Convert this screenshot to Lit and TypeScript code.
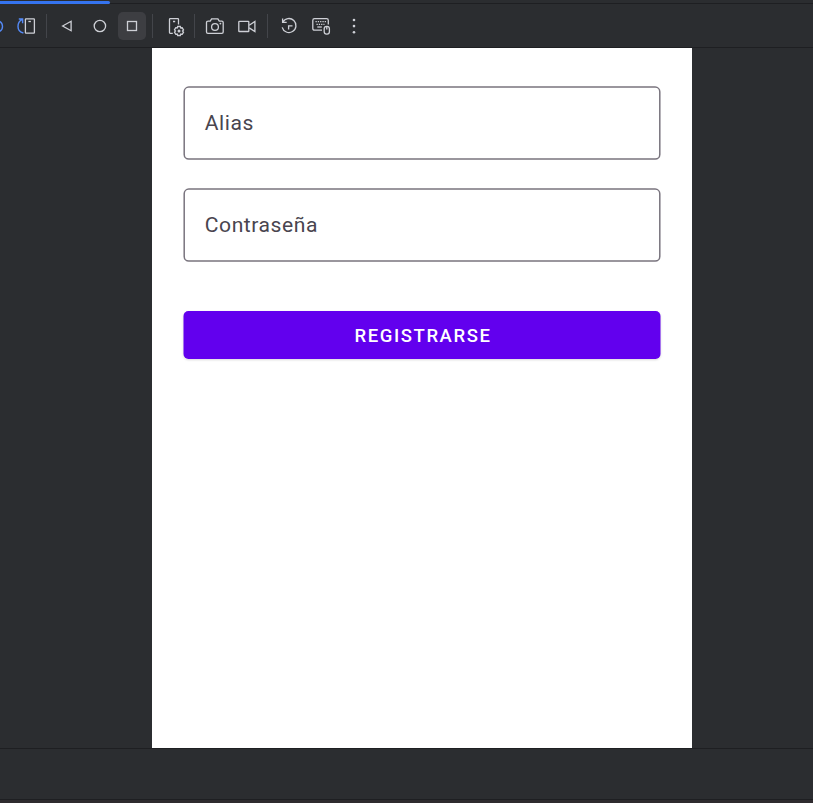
import { LitElement, html, css, svg } from "lit";
import { customElement, property } from "lit/decorators.js";

const icons: Record<string, unknown> = {
  rotateLeft: svg`<path class="blue" d="M17 7.1C19.3 8.2 20.5 10.1 20.5 12.5S19.3 16.6 17 17.8"/>`,
  rotateRight: svg`<path class="blue" d="M9.4 19C6.2 18.2 4 15.6 4 12.4C4 9.2 5.7 6.7 8.4 5.4M4.8 5H8.6V9.2"/>
    <rect x="11.4" y="4.8" width="9" height="14.4" rx=".6"/><path d="M14.4 7.5H16.9"/>`,
  back: svg`<path d="M7.6 12L16.1 7.3V16.7Z"/>`,
  home: svg`<circle cx="11.9" cy="12" r="5.7"/>`,
  overview: svg`<rect x="7.5" y="7.5" width="9" height="9"/>`,
  device: svg`<path d="M8.8 19.3H6.2Q5.5 19.3 5.5 18.6V5.4Q5.5 4.7 6.2 4.7H13.8Q14.5 4.7 14.5 5.4V10.5M9 7.5H11.2"/>
    <path d="M13.7 12.5H16.3L16.8 14L18.2 13.8L19.5 16L18.5 17L19.5 18.2L18.2 20.3L16.8 20L16.3 21.5H13.7L13.2 20L11.8 20.3L10.5 18.2L11.5 17L10.5 15.8L11.8 13.7L13.2 14Z"/>
    <circle class="solid" cx="15" cy="17" r="1.5"/>`,
  camera: svg`<path d="M4.8 7.2H7.2L8.6 4.8H14.9L16.3 7.2H18.8Q20.2 7.2 20.2 8.6V17.9Q20.2 19.3 18.8 19.3H4.9Q3.5 19.3 3.5 17.9V8.6Q3.5 7.2 4.9 7.2Z"/>
    <circle cx="12" cy="13" r="3.4"/><circle class="solid" cx="17.4" cy="9.6" r=".9"/>`,
  video: svg`<rect x="3.8" y="7.4" width="10" height="10.1" rx=".6"/><path d="M14.2 11.3L19.9 7.5V17.5L14.2 13.9"/>`,
  reset: svg`<path d="M5.6 4.4V8.4H9.7M5.8 8.2A7 7 0 1 1 5.2 13.3"/><path d="M11.6 15.4V11.9H15.5"/>`,
  keyboard: svg`<path d="M13 16.2H5.5Q3.8 16.2 3.8 14.5V6.4Q3.8 4.7 5.5 4.7H17.6Q19.3 4.7 19.3 6.4V10.5"/>
    <path class="keys" d="M6.5 7.7H17M7.5 10.3H15.5"/><path d="M8.3 13H12.8"/>
    <rect x="15.2" y="12.4" width="5.2" height="7.7" rx="2.4"/><path d="M17.8 12.5V15.5"/>`,
  more: svg`<circle class="solid" cx="12" cy="6" r="1.3"/><circle class="solid" cx="12" cy="12.1" r="1.3"/><circle class="solid" cx="12" cy="18.2" r="1.3"/>`,
};

@customElement("tool-button")
export class ToolButton extends LitElement {
  @property() icon = "";

  static styles = css`
    :host {
      display: flex;
      flex: 0 0 28px;
      height: 28px;
      align-items: center;
      justify-content: center;
      border-radius: 5px;
    }
    :host([active]) { background: #3d3e42; }
    svg {
      width: 24px;
      height: 24px;
      fill: none;
      stroke: #ced0d6;
      stroke-width: 1.3;
    }
    .blue { stroke: #548af7; stroke-width: 1.4; }
    .solid { fill: #ced0d6; stroke: none; }
    .keys { stroke-dasharray: 1.3 1; }
  `;

  render() {
    return html`<svg viewBox="0 0 24 24" aria-hidden="true">${icons[this.icon]}</svg>`;
  }
}

@customElement("app-root")
export class AppRoot extends LitElement {
  static styles = css`
    :host {
      display: flex;
      flex-direction: column;
      height: 803px;
      width: 813px;
      overflow: hidden;
      background: #2b2d30;
      font-family: Roboto, "Noto Sans", sans-serif;
    }
    * { box-sizing: border-box; }
    .tabs {
      flex: 0 0 4px;
      border-bottom: 1px solid #1e1f22;
      display: flex;
      align-items: flex-end;
    }
    .indicator {
      width: 110px;
      height: 3px;
      margin-bottom: -1px;
      background: #3574f0;
      border-radius: 0 2px 2px 0;
    }
    .toolbar {
      flex: 0 0 44px;
      display: flex;
      align-items: center;
      border-bottom: 1px solid #1e1f22;
    }
    .group { display: flex; gap: 4px; }
    .group.rotate { margin-left: -20px; }
    .group.nav { gap: 4.5px; }
    .separator { flex: 0 0 1px; height: 24px; background: #43454a; margin: 0 6px; }
    .separator.wide { margin: 0 9px 0 6px; }
    .separator.tight { margin: 0 6px 0 4px; }
    .separator.last { margin: 0 7px 0 6px; }
    .more { margin-left: 1px; }
    .screen {
      flex: 0 0 700px;
      width: 540px;
      margin-left: 152px;
      background: #fff;
      padding: 38px 31px;
      display: flex;
      flex-direction: column;
    }
    .field, .submit { position: relative; }
    .frame {
      position: absolute;
      inset: 0;
      width: 100%;
      height: 100%;
      overflow: visible;
    }
    .field {
      height: 74px;
      padding: 0 21.8px 2px;
      display: flex;
      align-items: center;
      font-size: 21.1px;
      letter-spacing: .54px;
      color: #49454f;
    }
    .field .frame { fill: none; stroke: #79747e; stroke-width: 1.5; }
    .field + .field { margin-top: 28px; }
    .submit {
      height: 48px;
      margin-top: 49px;
      border: 0;
      background: none;
      color: #fff;
      font: 500 18.5px Roboto, sans-serif;
      letter-spacing: 1.58px;
      padding: 2px 0 0 2px;
    }
    .submit .frame {
      fill: #6200ee;
      filter: drop-shadow(0 1px 1px rgba(0, 0, 0, .15));
    }
    .submit span { position: relative; }
    .status {
      flex: 0 0 52px;
      border-top: 1px solid #1e1f22;
      border-bottom: 1px solid #1e1f22;
    }
    .edge { flex: 1; background: #2f2b2f; }
  `;

  private field(label: string) {
    return html`<div class="field">
      <svg class="frame" viewBox="0 0 478 74"><rect x="1.2" y="1.1" width="475.6" height="72" rx="4.6"/></svg>
      <span>${label}</span>
    </div>`;
  }

  render() {
    return html`
      <div class="tabs"><div class="indicator"></div></div>
      <div class="toolbar">
        <div class="group rotate">
          <tool-button icon="rotateLeft"></tool-button>
          <tool-button icon="rotateRight"></tool-button>
        </div>
        <div class="separator"></div>
        <div class="group nav">
          <tool-button icon="back"></tool-button>
          <tool-button icon="home"></tool-button>
          <tool-button icon="overview" active></tool-button>
        </div>
        <div class="separator wide"></div>
        <tool-button icon="device"></tool-button>
        <div class="separator tight"></div>
        <div class="group">
          <tool-button icon="camera"></tool-button>
          <tool-button icon="video"></tool-button>
        </div>
        <div class="separator last"></div>
        <div class="group">
          <tool-button icon="reset"></tool-button>
          <tool-button icon="keyboard"></tool-button>
          <tool-button class="more" icon="more"></tool-button>
        </div>
      </div>
      <div class="screen">
        ${this.field("Alias")}
        ${this.field("Contraseña")}
        <button class="submit">
          <svg class="frame" viewBox="0 0 478 48"><rect x=".5" width="477" height="48" rx="5"/></svg>
          <span>REGISTRARSE</span>
        </button>
      </div>
      <div class="status"></div>
      <div class="edge"></div>
    `;
  }
}
